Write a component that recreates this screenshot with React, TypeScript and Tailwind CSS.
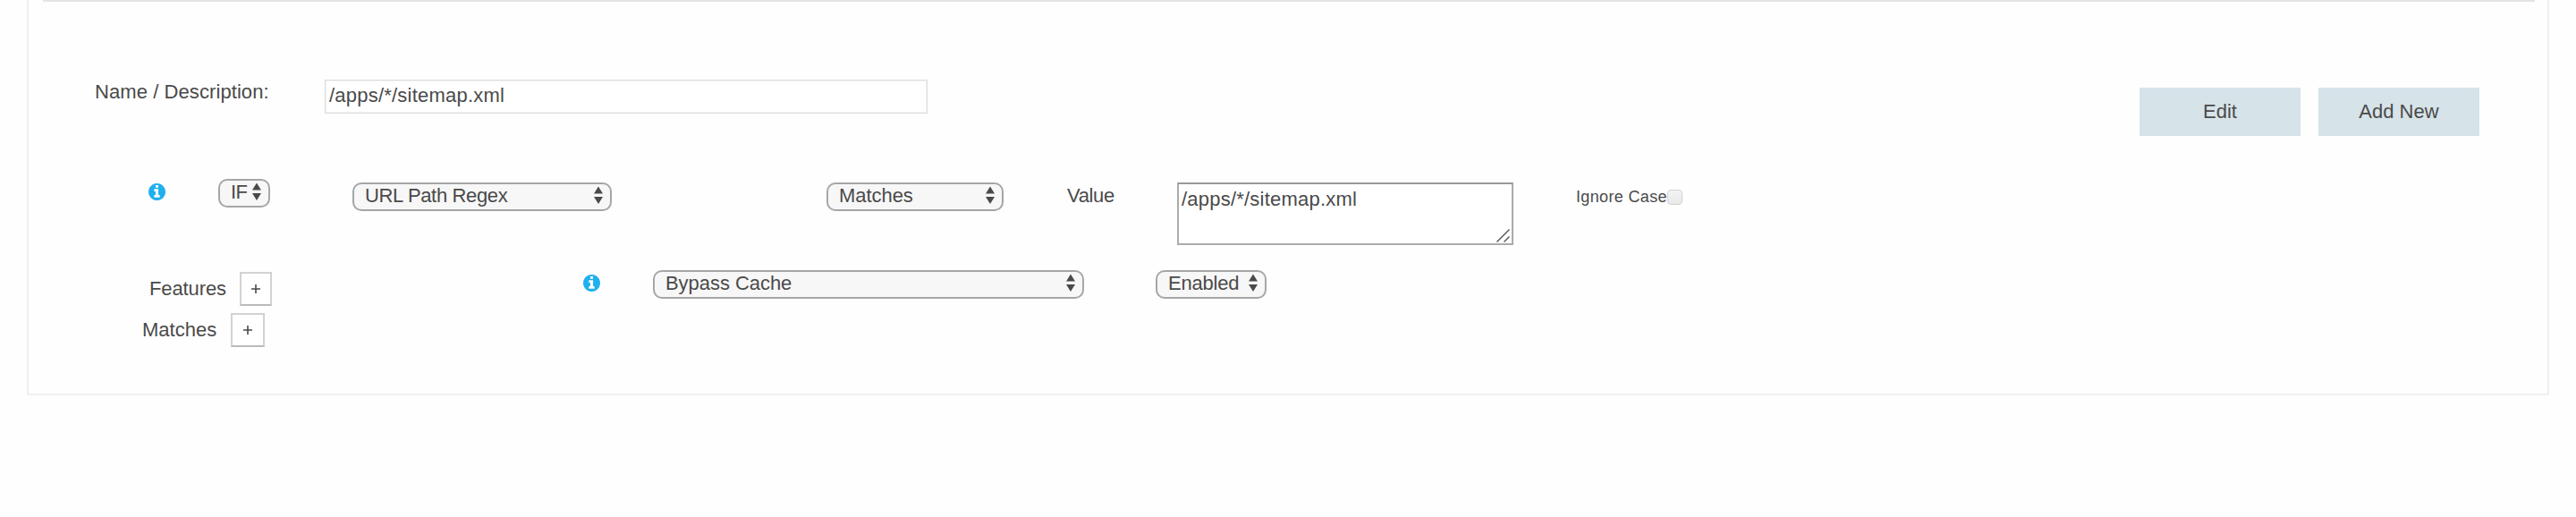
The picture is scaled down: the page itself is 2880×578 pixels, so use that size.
import type { ReactNode } from "react";

function InfoIcon({ className }: { className: string }) {
  return (
    <svg viewBox="0 0 1536 1536" className={`h-[19px] w-[19px] shrink-0 fill-[#1fb0ee] ${className}`}>
      <path d="M1024 1248v-160q0-14-9-23t-23-9h-96V544q0-14-9-23t-23-9H544q-14 0-23 9t-9 23v160q0 14 9 23t23 9h96v320h-96q-14 0-23 9t-9 23v160q0 14 9 23t23 9h448q14 0 23-9t9-23zM896 352V192q0-14-9-23t-23-9H672q-14 0-23 9t-9 23v160q0 14 9 23t23 9h192q14 0 23-9t9-23zm640 416q0 209-103 385.500T1153.500 1433 768 1536t-385.500-103T103 1153.500 0 768t103-385.500T382.500 103 768 0t385.500 103T1433 382.500 1536 768z" />
    </svg>
  );
}

function SelectBox({ label, className }: { label: string; className: string }) {
  return (
    <div
      className={`flex h-8 shrink-0 items-start justify-between rounded-[10px] border-2 border-[#a6a6a6] bg-[#f7f7f7] pr-2 pl-3 ${className}`}
    >
      <span className="leading-[26px]">{label}</span>
      <svg viewBox="0 0 10 20" className="mt-[2px] h-5 w-[10px] fill-[#4a4a4a]">
        <path d="M5 0.500 10 8.500H0zM5 20 10 12H0z" />
      </svg>
    </div>
  );
}

function PlusButton({ className }: { className: string }) {
  return (
    <button
      className={`flex h-[38px] shrink-0 items-center justify-center border-2 border-[#d2d2d2] border-b-[#bababa] bg-white ${className}`}
    >
      <svg viewBox="0 0 10 10" className="h-[10px] w-[10px] fill-[#4a4a4a]">
        <path d="M4.200 0h1.600v4.200H10v1.600H5.800V10H4.200V5.800H0V4.200h4.200z" />
      </svg>
    </button>
  );
}

function ActionButton({ children }: { children: ReactNode }) {
  return (
    <button className="h-[54px] w-[180px] bg-[#d6e3e9] pb-px">{children}</button>
  );
}

export default function App() {
  return (
    <div className="h-[578px] w-[2880px] bg-[#fefefe] pl-[30px] font-['Liberation_Sans',Arial,sans-serif] text-[22px] leading-[26px] whitespace-nowrap text-[#4a4a4a]">
      <section className="h-[442px] w-[2820px] border-2 border-t-0 border-[#efefef]">
        <div className="ml-4 h-0.5 w-[2786px] bg-[#e4e4e4]" />

        <div className="flex h-[198px] items-start">
          <label className="mt-[88px] ml-[74px] w-[257px] tracking-[0.08px]">Name / Description:</label>
          <div className="mt-[87px] h-[38px] w-[674px] border border-[#dedede] bg-white pt-[4px] pl-[4px] tracking-[0.22px] shadow-[inset_0_0_0_1px_#f1f1f1]">
            /apps/*/sitemap.xml
          </div>
          <div className="mt-24 ml-[1355px] flex gap-5">
            <ActionButton>Edit</ActionButton>
            <ActionButton>Add New</ActionButton>
          </div>
        </div>

        <div className="flex h-[102px] items-start">
          <InfoIcon className="mt-[5px] ml-[134px]" />
          <SelectBox label="IF" className="ml-[59px] w-[58px] tracking-[-0.5px]" />
          <SelectBox label="URL Path Regex" className="mt-1 ml-[92px] w-[290px] tracking-[-0.35px]" />
          <SelectBox label="Matches" className="mt-1 ml-[240px] w-[198px] tracking-[-0.05px]" />
          <span className="mt-[6px] ml-[71px] w-[123px] tracking-[-0.35px]">Value</span>
          <div className="relative mt-1 h-[70px] w-[376px] border-2 border-[#ababab] border-t-[#999999] bg-white pt-[4px] pl-[3px] tracking-[0.22px]">
            /apps/*/sitemap.xml
            <svg viewBox="0 0 15 15" className="absolute right-[2px] bottom-[1px] h-[15px] w-[15px]">
              <path d="M0.500 14.500 14.500 0.500M8.500 14.500l6-6" className="fill-none stroke-[#4a4a4a] stroke-[1.300]" />
            </svg>
          </div>
          <label className="mt-[7px] ml-[70px] flex w-[119px] justify-between text-[18px] tracking-[0.35px]">
            Ignore Case
            <span className="mt-[5px] h-[17px] w-[17px] rounded-[4px] border border-[#d2d2d2] bg-linear-to-b from-[#f4f4f4] to-[#e9e9e9]" />
          </label>
        </div>

        <div className="flex h-[46px] items-start">
          <span className="mt-[8px] ml-[135px] w-[101px] tracking-[-0.1px]">Features</span>
          <PlusButton className="mt-0.5 w-9" />
          <InfoIcon className="mt-[5px] ml-[348px]" />
          <SelectBox label="Bypass Cache" className="ml-[59px] w-[482px] tracking-[-0.05px]" />
          <SelectBox label="Enabled" className="ml-20 w-[124px] tracking-[-0.2px]" />
        </div>

        <div className="flex items-start">
          <span className="mt-[8px] ml-[127px] w-[99px]">Matches</span>
          <PlusButton className="mt-0.5 w-[38px]" />
        </div>
      </section>
    </div>
  );
}
